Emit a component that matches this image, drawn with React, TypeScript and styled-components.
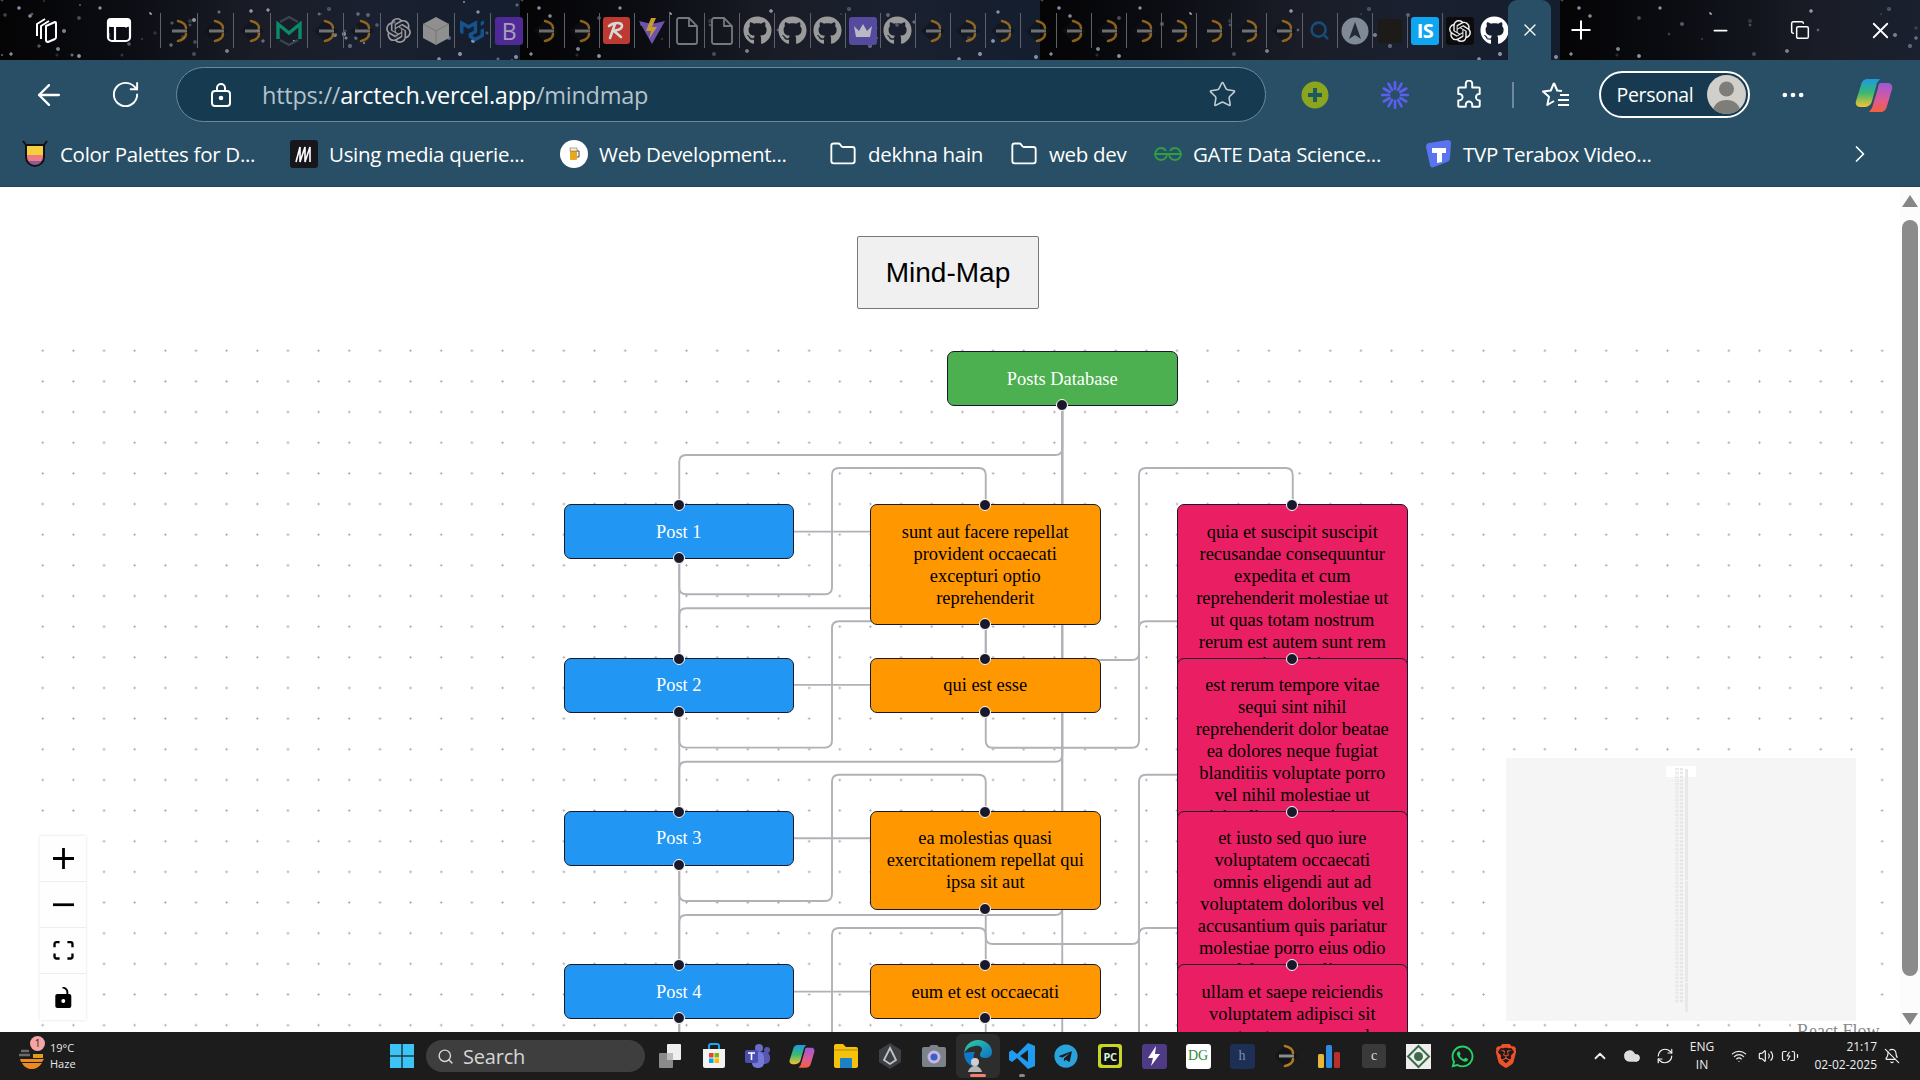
import React from "react";
import styled, {createGlobalStyle} from "styled-components";
import {ArrowLeft, BatteryCharging, BellOff, ChevronRight, ChevronUp, Cloud, Copy, Folder, Minus, MoreHorizontal, Plus, RefreshCw, RotateCw, Search, Star, Volume2, Wifi, X} from "lucide-react";
import {FaGithub, FaTelegram, FaWhatsapp} from "react-icons/fa";
import {SiBrave, SiMui, SiOpenai} from "react-icons/si";

const GlobalStyle = createGlobalStyle`
  html, body { margin: 0; padding: 0; height: 100%; overflow: hidden; background: #fff; }
  #root { height: 100%; }
`

// cheap star field, one tile repeated over the tab strip
function starField(count: number) {
    const out: string[] = []
    let seed = 7
    const next = () => {
        seed = (seed * 16807) % 2147483647
        return seed / 2147483647
    }
    for (let i = 0; i < count; i++) {
        const size = 0.5 + next() * 1.1
        const alpha = 0.15 + next() * 0.55
        out.push(`radial-gradient(circle at ${(next() * 520).toFixed(0)}px ${(next() * 60).toFixed(0)}px, rgba(200,210,235,${alpha.toFixed(2)}) ${size.toFixed(1)}px, transparent ${(size + 0.9).toFixed(1)}px)`)
    }
    return out.join(",")
}

const STARS = starField(70)

const Screen = styled.div`
  width: 1920px;
  height: 1080px;
  display: flex;
  flex-direction: column;
  overflow: hidden;
  font-family: "Open Sans", "Noto Sans", sans-serif;
`
const TabStrip = styled.div`
  height: 60px;
  flex: none;
  display: flex;
  align-items: flex-start;
  color: #fff;
  background-color: #0a0d14;
  background-image: ${STARS}, linear-gradient(90deg, #040405 0%, #0b0c12 22%, #1a1d27 50%, #1a2030 72%, #141e2e 100%);
  background-size: 520px 60px, 100% 100%;
`
const StripButton = styled.div<{ $w: number }>`
  width: ${p => p.$w}px;
  height: 60px;
  flex: none;
  display: flex;
  align-items: center;
  justify-content: center;
`
const StripSpacer = styled.div`
  flex: 1;
`
const Pins = styled.div`
  display: flex;
  flex: none;
  width: 1348px;
  height: 60px;
  margin-left: 12px;
`
const Pin = styled.div<{ $wide?: boolean }>`
  width: ${p => p.$wide ? 36.7 : 35.15}px;
  height: 35px;
  margin-top: 13px;
  flex: none;
  border-left: 1.5px solid #5e6167;
  display: flex;
  align-items: center;
  justify-content: center;
  box-sizing: border-box;
  color: #9a9a9a;
`
const DimMark = styled.span`
  display: flex;
  opacity: .78;
`
const ActiveTab = styled.div`
  width: 43px;
  height: 60px;
  flex: none;
  background: #284f66;
  border-radius: 9px 9px 0 0;
  display: flex;
  align-items: center;
  justify-content: center;
`
const PlainPin = styled(Pin)`
  border-left: none;
`
const Toolbar = styled.div`
  height: 67px;
  flex: none;
  box-sizing: border-box;
  padding-top: 2px;
  background: #284f66;
  display: flex;
  align-items: center;
  color: #fff;
`
const ToolIcon = styled.div<{ $w: number }>`
  width: ${p => p.$w}px;
  flex: none;
  display: flex;
  justify-content: center;
  align-items: center;
`
const AddressBar = styled.div`
  width: 1090px;
  height: 55px;
  flex: none;
  box-sizing: border-box;
  margin-left: 24px;
  border: 1.5px solid #6c8a9c;
  border-radius: 28px;
  background: #163a50;
  display: flex;
  align-items: center;
  padding: 0 28px 0 33px;
  gap: 30px;
`
const Url = styled.div`
  flex: 1;
  font-size: 23.5px;
  letter-spacing: -0.25px;
  color: #b4c2cb;
  white-space: nowrap;
  b { font-weight: 400; color: #fff; }
`
const ToolSep = styled.div`
  width: 1.5px;
  height: 26px;
  background: #6c8a9c;
  flex: none;
`
const Profile = styled.div`
  width: 151px;
  height: 47px;
  box-sizing: border-box;
  flex: none;
  border: 2px solid #fff;
  border-radius: 24px;
  background: #173a50;
  display: flex;
  align-items: center;
  justify-content: space-between;
  padding: 0 2px 0 16px;
  font-size: 19.5px;
  letter-spacing: -0.3px;
`
const Avatar = styled.div`
  width: 39px;
  height: 39px;
  border-radius: 50%;
  overflow: hidden;
  background: #d0cfca;
  flex: none;
`
const BookmarkBar = styled.div`
  height: 60px;
  flex: none;
  background: #284f66;
  border-bottom: 1px solid #20445a;
  box-sizing: border-box;
  padding: 0 0 5px 21px;
  color: #fff;
  display: flex;
  align-items: center;
  position: relative;
`
const Bookmark = styled.div<{ $w: number }>`
  width: ${p => p.$w}px;
  flex: none;
  display: flex;
  align-items: center;
  gap: 11px;
  font-size: 20.5px;
  letter-spacing: -0.3px;
  white-space: nowrap;
`
const BookmarkIcon = styled.div`
  width: 28px;
  height: 28px;
  flex: none;
  display: flex;
  align-items: center;
  justify-content: center;
`
const BookmarkMore = styled.div`
  margin-left: auto;
  margin-right: 46px;
  display: flex;
`
const Page = styled.div`
  flex: 1;
  min-height: 0;
  display: flex;
  background: #fff;
`
const Content = styled.div`
  flex: 1;
  min-width: 0;
  display: flex;
  flex-direction: column;
`
const HeadingRow = styled.div`
  height: 150px;
  flex: none;
  display: flex;
  justify-content: center;
  align-items: flex-start;
  padding: 49px 4px 0 0;
  box-sizing: border-box;
`
const MapButton = styled.div`
  width: 182px;
  height: 73px;
  box-sizing: border-box;
  border: 1.25px solid #777;
  border-radius: 2px;
  background: #f0f0f0;
  color: #000;
  font-family: "Liberation Sans", Arial, sans-serif;
  font-size: 28px;
  display: flex;
  align-items: center;
  justify-content: center;
`
const Canvas = styled.div`
  flex: 1;
  position: relative;
  overflow: hidden;
  margin: 0 10px 0 25px;
  background-image: radial-gradient(circle, #a6a6ac .9px, transparent 1.2px);
  background-size: 30.67px 30.67px;
  background-position: 2.4px -1.6px;
`
const EdgeLayer = styled.svg`
  position: absolute;
  left: 0;
  top: 0;
  width: 100%;
  height: 100%;
  overflow: visible;
`
const NODE_COLOURS = {
    green: {bg: "#4caf50", fg: "#fff"},
    blue: {bg: "#2196f3", fg: "#fff"},
    orange: {bg: "#ff9800", fg: "#000"},
    pink: {bg: "#e91e63", fg: "#000"},
}
type Tone = keyof typeof NODE_COLOURS
const Node = styled.div<{ $x: number, $y: number, $tone: Tone }>`
  position: absolute;
  left: ${p => p.$x}px;
  top: ${p => p.$y}px;
  width: 230.5px;
  box-sizing: border-box;
  padding: 15.5px 14.5px;
  border: 1.25px solid #1a192b;
  border-radius: 7px;
  background: ${p => NODE_COLOURS[p.$tone].bg};
  color: ${p => NODE_COLOURS[p.$tone].fg};
  font-family: "Liberation Serif", "Times New Roman", serif;
  font-size: 18.4px;
  line-height: 22px;
  text-align: center;
`
const Handle = styled.span<{ $side: "top" | "bottom" }>`
  position: absolute;
  left: 50%;
  ${p => p.$side}: 0;
  width: 12px;
  height: 12px;
  box-sizing: border-box;
  border: 1.25px solid #fff;
  border-radius: 50%;
  background: #1a192b;
  transform: translate(-50%, ${p => p.$side === "top" ? "-50%" : "50%"});
`
const Controls = styled.div`
  position: absolute;
  left: 15px;
  bottom: 12px;
  width: 46px;
  background: #fefefe;
  box-shadow: 0 0 3px rgba(0, 0, 0, .12);
`
const ControlButton = styled.div`
  height: 46px;
  border-bottom: 1.25px solid #eee;
  box-sizing: border-box;
  display: flex;
  align-items: center;
  justify-content: center;
  &:last-child { border-bottom: none; }
`
const MiniMap = styled.svg`
  position: absolute;
  right: 34px;
  bottom: 11.5px;
  width: 350px;
  height: 263px;
  background: #f5f5f5;
`
const Attribution = styled.div`
  position: absolute;
  right: 5px;
  top: 682px;
  width: 88px;
  height: 30px;
  padding-left: 6px;
  background: #fff;
  color: #888;
  font-family: "Liberation Serif", serif;
  font-size: 18px;
  line-height: 24px;
  white-space: nowrap;
  overflow: hidden;
`
const ScrollTrack = styled.div`
  width: 20px;
  flex: none;
  background: #fcfcfc;
  display: flex;
  flex-direction: column;
  align-items: center;
  padding: 8px 0 7px;
  box-sizing: border-box;
`
const ScrollArrow = styled.div<{ $down?: boolean }>`
  width: 0;
  height: 0;
  flex: none;
  border-left: 8px solid transparent;
  border-right: 8px solid transparent;
  ${p => p.$down ? "border-top: 12px solid #868686;" : "border-bottom: 12px solid #868686;"}
`
const ScrollThumb = styled.div`
  width: 16px;
  height: 756px;
  flex: none;
  margin: 13px 0 37px;
  border-radius: 8px;
  background: #8b8b8b;
`
const Taskbar = styled.div`
  height: 48px;
  flex: none;
  background: #1c1c1c;
  display: flex;
  align-items: center;
  color: #fff;
`
const Weather = styled.div`
  width: 380px;
  flex: none;
  position: relative;
  display: flex;
  align-items: center;
  gap: 4px;
  padding-left: 18px;
  box-sizing: border-box;
  font-size: 11px;
  line-height: 16px;
  color: #e8e8e8;
`
const WeatherBadge = styled.span`
  position: absolute;
  left: 30px;
  top: -4px;
  width: 15px;
  height: 15px;
  border-radius: 50%;
  background: #f6a5a5;
  color: #222;
  text-align: center;
  font-size: 10px;
  line-height: 15px;
`
const TaskSlot = styled.div<{ $w?: number, $active?: boolean }>`
  width: ${p => p.$w ?? 44}px;
  height: 44px;
  flex: none;
  display: flex;
  align-items: center;
  justify-content: center;
  border-radius: 6px;
  ${p => p.$active ? "background: #2d2d2d;" : ""}
  position: relative;
`
const Running = styled.span<{ $on?: boolean }>`
  position: absolute;
  bottom: 1px;
  left: 50%;
  transform: translateX(-50%);
  height: 3px;
  border-radius: 2px;
  width: ${p => p.$on ? 16 : 6}px;
  background: ${p => p.$on ? "#f08070" : "#888"};
`
const SearchBox = styled.div`
  width: 219px;
  height: 32px;
  flex: none;
  margin: 0 3px 0 2px;
  border-radius: 16px;
  background: #3e3e3e;
  display: flex;
  align-items: center;
  gap: 9px;
  padding-left: 11px;
  box-sizing: border-box;
  font-size: 20px;
  letter-spacing: -.2px;
  color: #d6d6d6;
`
const Tile = styled.div<{ $bg: string, $fg?: string, $size?: number }>`
  width: ${p => p.$size ?? 24}px;
  height: ${p => p.$size ?? 24}px;
  border-radius: 3px;
  background: ${p => p.$bg};
  color: ${p => p.$fg ?? "#fff"};
  display: flex;
  align-items: center;
  justify-content: center;
  font-size: 14px;
  font-family: "Liberation Serif", serif;
`
const PinLetter = styled(Tile)<{ $text?: number, $weight?: number }>`
  font-family: "Open Sans", sans-serif;
  font-weight: ${p => p.$weight ?? 700};
  font-size: ${p => p.$text ?? 15}px;
  letter-spacing: -.5px;
`
const Tray = styled.div`
  margin-left: auto;
  margin-right: 13px;
  display: flex;
  align-items: center;
  color: #eee;
`
const TrayItem = styled.div<{ $w: number }>`
  width: ${p => p.$w}px;
  flex: none;
  display: flex;
  justify-content: center;
  align-items: center;
`
const TrayClock = styled(TrayItem)`
  justify-content: flex-end;
`
const TrayText = styled.div<{ $right?: boolean }>`
  font-size: 12px;
  line-height: 18px;
  text-align: ${p => p.$right ? "right" : "center"};
  white-space: nowrap;
`

// node geometry, taken in window pixels, the canvas starts at 25,337
const OX = 25
const OY = 337
const NUDGE = 0.8
const COL = {post: 564.5, title: 871, body: 1178}
const CX = {post: 679.25, title: 985.75, body: 1292.75, root: 1062.25}
const ROW = [505, 658.3, 811.7, 965]
const SHORT = 53.3
const TITLE_BOTTOM = [624, 711.7, 908, 1018.3]

const TITLES = [
    "sunt aut facere repellat provident occaecati excepturi optio reprehenderit",
    "qui est esse",
    "ea molestias quasi exercitationem repellat qui ipsa sit aut",
    "eum et est occaecati",
]
const BODIES = [
    "quia et suscipit suscipit recusandae consequuntur expedita et cum reprehenderit molestiae ut ut quas totam nostrum rerum est autem sunt rem eveniet architecto",
    "est rerum tempore vitae sequi sint nihil reprehenderit dolor beatae ea dolores neque fugiat blanditiis voluptate porro vel nihil molestiae ut reiciendis qui aperiam non debitis possimus qui neque nisi nulla",
    "et iusto sed quo iure voluptatem occaecati omnis eligendi aut ad voluptatem doloribus vel accusantium quis pariatur molestiae porro eius odio et labore et velit aut",
    "ullam et saepe reiciendis voluptatem adipisci sit amet autem assumenda provident rerum culpa quis hic commodi nesciunt rem tenetur doloremque ipsam iure",
]

type Point = [number, number]

function route(points: Point[], r = 7) {
    let d = `M${points[0][0] - OX} ${points[0][1] - OY}`
    for (let i = 1; i < points.length; i++) {
        const [x, y] = points[i]
        const [px, py] = points[i - 1]
        if (i === points.length - 1) {
            d += `L${x - OX} ${y - OY}`
            break
        }
        const [nx, ny] = points[i + 1]
        const inLen = Math.hypot(x - px, y - py) || 1
        const outLen = Math.hypot(nx - x, ny - y) || 1
        const a = Math.min(r, inLen / 2)
        const b = Math.min(r, outLen / 2)
        d += `L${x - OX - (x - px) / inLen * a} ${y - OY - (y - py) / inLen * a}`
        d += `Q${x - OX} ${y - OY} ${x - OX + (nx - x) / outLen * b} ${y - OY + (ny - y) / outLen * b}`
    }
    return d
}

function buildEdges() {
    const edges: string[] = []
    ROW.forEach((top, i) => {
        const postBottom = top + SHORT
        edges.push(route([[CX.root, 405], [CX.root, top - 50], [CX.post, top - 50], [CX.post, top]]))
        edges.push(route([[794, top + 26.6], [871, top + 26.6]]))
        edges.push(route([[CX.post, postBottom], [CX.post, postBottom + 36], [832, postBottom + 36], [832, top - 37], [CX.title, top - 37], [CX.title, top]]))
        edges.push(route([[CX.title, TITLE_BOTTOM[i]], [CX.title, TITLE_BOTTOM[i] + 36], [1139, TITLE_BOTTOM[i] + 36], [1139, top - 37], [CX.body, top - 37], [CX.body, top]]))
        if (i < ROW.length - 1) edges.push(route([[CX.post, postBottom], [CX.post, ROW[i + 1]]]))
    })
    edges.push(route([[CX.root, 405], [CX.root, 1060]]))
    edges.push(route([[CX.post, 1018], [CX.post, 1060]]))
    return edges
}

const ArcMark = () => <svg width="28" height="28" viewBox="0 0 28 28" fill="none">
    <path d="M14 2 26 14 14 26 2 14Z" fill="#101218" opacity=".7"/>
    <path d="M13 4c5 1 8 4 8 7M13 24c5-1 8-4 8-7" stroke="#b27a1e" strokeWidth="2.6" strokeLinecap="round"/>
    <path d="M7 14h15" stroke="#8b8b8b" strokeWidth="3"/>
</svg>

const MMark = () => <svg width="28" height="32" viewBox="0 0 28 32" fill="none">
    <path d="M5 7 14 2l9 5M5 25l9 5 9-5" stroke="#3b4352" strokeWidth="2.4"/>
    <path d="M3 24V9l11 9 11-9v15" stroke="#0a8a66" strokeWidth="3.4"/>
</svg>

const CubeMark = () => <svg width="28" height="30" viewBox="0 0 28 30">
    <path d="M14 1 27 8v14l-13 7L1 22V8z" fill="#8f8f8f"/>
    <path d="M1 8l13 7 13-7M14 15v14" stroke="#777" fill="none"/>
</svg>

const RMark = () => <Tile $bg="#bd3a30" $fg="#ddd" $size={27}>
    <svg width="21" height="21" viewBox="0 0 21 21" fill="none">
        <path d="M3 6c5-4 13-4 13 0s-6 4-8 5l7 6M9 4 4 18" stroke="#d8d8d8" strokeWidth="2.6" strokeLinecap="round"/>
    </svg>
</Tile>

const ViteMark = () => <svg width="28" height="28" viewBox="0 0 28 28">
    <path d="M1 4 14 27 27 4 14 7z" fill="#6d53b0"/>
    <path d="M13 1 8 14h5l-2 8 8-12h-5l4-9z" fill="#c99a2e"/>
</svg>

const DocMark = () => <svg width="22" height="28" viewBox="0 0 22 28" fill="none" stroke="#77787c" strokeWidth="1.8">
    <path d="M3 1h10l8 8v16a2 2 0 0 1-2 2H3a2 2 0 0 1-2-2V3a2 2 0 0 1 2-2z"/>
    <path d="M13 1v8h8"/>
</svg>

const CrownMark = () => <Tile $bg="#554a9e" $size={28}>
    <svg width="20" height="16" viewBox="0 0 20 16"><path d="M1 3l5 5 4-7 4 7 5-5-2 11H3z" fill="#b9b9c4"/></svg>
</Tile>

const AMark = () => <svg width="28" height="28" viewBox="0 0 28 28">
    <circle cx="14" cy="14" r="13.5" fill="#808a96"/>
    <path d="M14 5 8 22l6-4 6 4z" fill="#232a36"/>
</svg>

type PinSpec = { key: string, node?: React.ReactNode, wide?: boolean }

function pinList(): PinSpec[] {
    const arc = <DimMark><ArcMark/></DimMark>
    const git = <FaGithub size={29}/>
    const first: React.ReactNode[] = [arc, arc, arc, <MMark/>, arc, arc, <SiOpenai size={25} color="#9a9a9a"/>, <CubeMark/>,
        <SiMui size={24} color="#15538f"/>, <PinLetter $bg="#4f2a96" $fg="#a7a1b8" $size={28} $text={23} $weight={400}>B</PinLetter>, arc]
    const rest: React.ReactNode[] = [arc, <RMark/>, <ViteMark/>, <DocMark/>, <DocMark/>, git, git, git, <CrownMark/>, git,
        arc, arc, arc, arc, arc, arc, arc, arc, arc, arc, arc,
        <Search size={21} color="#154c78" strokeWidth={3}/>, <AMark/>]
    return [
        ...first.map((node, i) => ({key: `a${i}`, node, wide: true})),
        ...rest.map((node, i) => ({key: `b${i}`, node})),
    ]
}

const TabsIcon = () => <svg width="32" height="32" viewBox="0 0 32 32" fill="none" stroke="#fff" strokeWidth="2" strokeLinejoin="round">
    <path d="M8 22V10l8-5"/>
    <path d="M12 25V12l8-5"/>
    <path d="M17 12l9-4a1 1 0 0 1 1 1v14a2 2 0 0 1-1 2l-7 3a2 2 0 0 1-2-2z"/>
</svg>

const PanelIcon = () => <svg width="26" height="26" viewBox="0 0 26 26" fill="none" stroke="#fff" strokeWidth="2.2">
    <rect x="2" y="2" width="22" height="22" rx="4"/>
    <rect x="2" y="2" width="22" height="7" rx="3" fill="#fff"/>
    <path d="M9 9v15"/>
</svg>

const LockIcon = () => <svg width="22" height="26" viewBox="0 0 22 26" fill="none" stroke="#fff" strokeWidth="2">
    <rect x="2" y="9" width="18" height="15" rx="3"/>
    <path d="M7 9V6a4 4 0 0 1 8 0v3"/>
    <circle cx="11" cy="16" r="1.3" fill="#fff"/>
</svg>

const AddinIcon = () => <svg width="28" height="28" viewBox="0 0 28 28">
    <circle cx="14" cy="14" r="13.5" fill="#8ba51f"/>
    <path d="M14 7v14M7 14h14" stroke="#1d5a5e" strokeWidth="4"/>
</svg>

const BurstIcon = () => <svg width="28" height="28" viewBox="0 0 28 28" stroke="#5b5ff0" strokeWidth="2.6" strokeLinecap="round">
    {Array.from({length: 12}).map((_, i) => {
        const a = i / 12 * Math.PI * 2
        return <line key={i} x1={14 + Math.cos(a) * 6} y1={14 + Math.sin(a) * 6} x2={14 + Math.cos(a) * 13} y2={14 + Math.sin(a) * 13}/>
    })}
</svg>

const ExtensionIcon = () => <svg width="30" height="30" viewBox="0 0 28 28" fill="none" stroke="#fff" strokeWidth="1.8" strokeLinejoin="round">
    <path d="M11 3.500a3 3 0 0 1 6 0V7h6a1 1 0 0 1 1 1v5h-.5a3 3 0 0 0 0 6H24v5a1 1 0 0 1-1 1h-6v-2a3 3 0 0 0-6 0v2H5a1 1 0 0 1-1-1v-5h1a3 3 0 0 0 0-6H4V8a1 1 0 0 1 1-1h6z"/>
</svg>

const FavIcon = () => <svg width="30" height="30" viewBox="0 0 30 30" fill="none" stroke="#fff" strokeWidth="2" strokeLinejoin="round">
    <path d="M13 3l3.2 7.5 4.8.6M13 3l-3.2 7.5L2 11.500l6 5.300L6.300 25 13 21"/>
    <path d="M19 15h9M17 20h11M17 25h11"/>
</svg>

const CopilotIcon = ({size = 38}: { size?: number }) => <svg width={size} height={size} viewBox="0 0 38 38">
    <defs>
        <linearGradient id="cpa" x1="0" y1="0" x2="0" y2="1">
            <stop offset="0" stopColor="#1a9be0"/><stop offset=".5" stopColor="#3cb870"/><stop offset="1" stopColor="#f4c430"/>
        </linearGradient>
        <linearGradient id="cpb" x1="0" y1="0" x2="0" y2="1">
            <stop offset="0" stopColor="#9a5ad8"/><stop offset=".6" stopColor="#e05a90"/><stop offset="1" stopColor="#f0603c"/>
        </linearGradient>
    </defs>
    <path d="M13 3h12l-3 4-5 18c-1 4-4 6-8 6H5c-3 0-5-3-4-6l5-16c1-4 3-6 7-6z" fill="url(#cpa)"/>
    <path d="M26 7h7c3 0 5 3 4 6l-5 17c-1 4-3 6-7 6H14l3-4 6-20c0-3 1-5 3-5z" fill="url(#cpb)"/>
</svg>

const BeerIcon = () => <svg width="28" height="28" viewBox="0 0 28 28">
    <circle cx="14" cy="14" r="14" fill="#fff"/>
    <rect x="10" y="8" width="7" height="12" rx="1" fill="#e8a820"/>
    <rect x="10" y="8" width="7" height="3" fill="#fff3c8" stroke="#555" strokeWidth=".5"/>
    <path d="M17 11h2v6h-2" fill="none" stroke="#444"/>
</svg>

const PaletteIcon = () => <svg width="28" height="30" viewBox="0 0 28 30">
    <path d="M5 6h18v12a9 9 0 0 1-18 0z" fill="#f4d03f"/>
    <path d="M5 16h18v2l-1 4H6l-1-4z" fill="#ee7b83"/>
    <path d="M6 22h16l-2 4-6 2-6-2z" fill="#8d5a9a"/>
    <path d="M2 2l3 4h18l3-4M5 6v12a9 9 0 0 0 18 0V6" fill="none" stroke="#111" strokeWidth="2"/>
</svg>

const MediaIcon = () => <Tile $bg="#16161c" $fg="#fff" $size={28}>
    <svg width="20" height="18" viewBox="0 0 20 18" fill="none" stroke="#fff" strokeWidth="1.6"><path d="M2 17 6 2v15L11 2v15l5-15v15"/></svg>
</Tile>

const GfgIcon = () => <svg width="28" height="16" viewBox="0 0 28 16" fill="none" stroke="#2f9e44" strokeWidth="1.8">
    <path d="M14 8H1c1-4 3-6 6-6 2 0 4 1 5 3M14 8H27c-1-4-3-6-6-6-2 0-4 1-5 3M1 9c1 3 3 5 6 5s5-2 6-5M27 9c-1 3-3 5-6 5s-5-2-6-5"/>
</svg>

const TeraIcon = () => <svg width="28" height="30" viewBox="0 0 28 30">
    <path d="M5 4 24 1c2 0 3 1 3 3l-1 15c0 2-1 3-3 4L10 28c-2 1-4 0-4-2L2 8c0-2 1-4 3-4z" fill="#5a74f0"/>
    <path d="M8 9h14v5h-4v9l-5 1v-10H8z" fill="#fff"/>
</svg>

const WinLogo = () => <svg width="24" height="24" viewBox="0 0 24 24" fill="#3cc4f4">
    <rect x="0" y="0" width="11.400" height="11.400"/><rect x="12.600" y="0" width="11.400" height="11.400"/>
    <rect x="0" y="12.600" width="11.400" height="11.400"/><rect x="12.600" y="12.600" width="11.400" height="11.400"/>
</svg>

const WeatherIcon = () => <svg width="28" height="30" viewBox="0 0 28 30">
    <path d="M3 10h8M1 14h11" stroke="#6a6a6a" strokeWidth="2.400"/>
    <path d="M2 18h24l-2 3H3zM4 22h20c-3 4-6 6-10 6s-8-2-10-6z" fill="#ec8a20"/>
    <rect x="15" y="13" width="10" height="4" fill="#d9a020"/>
</svg>

const WidgetIcon = () => <svg width="24" height="24" viewBox="0 0 24 24">
    <rect x="9" y="0" width="14" height="16" rx="1" fill="#efefef"/>
    <rect x="1" y="9" width="14" height="15" rx="1" fill="#8a8a8a"/>
    <rect x="9" y="9" width="6" height="7" fill="#bdbdbd"/>
</svg>

const StoreIcon = () => <svg width="24" height="26" viewBox="0 0 24 26">
    <path d="M7 6V3a2 2 0 0 1 2-2h6a2 2 0 0 1 2 2v3" fill="none" stroke="#1aa6e8" strokeWidth="2"/>
    <path d="M1 6h22v17a2 2 0 0 1-2 2H3a2 2 0 0 1-2-2z" fill="#f2f2f2"/>
    <rect x="7" y="10" width="4.500" height="4.500" fill="#e5452c"/><rect x="12.500" y="10" width="4.500" height="4.500" fill="#7fba00"/>
    <rect x="7" y="15.500" width="4.500" height="4.500" fill="#00a4ef"/><rect x="12.500" y="15.500" width="4.500" height="4.500" fill="#ffb900"/>
</svg>

const TeamsIcon = () => <svg width="26" height="26" viewBox="0 0 26 26">
    <circle cx="14" cy="5" r="4" fill="#6a6cc8"/><circle cx="22" cy="7" r="3" fill="#5558ae"/>
    <rect x="11" y="9" width="14" height="12" rx="5" fill="#5558ae"/>
    <rect x="7" y="9" width="12" height="16" rx="5" fill="#7678d8"/>
    <rect x="0" y="7" width="13" height="13" rx="2" fill="#4a4db0"/>
    <path d="M3 10h7M6.500 10v7" stroke="#fff" strokeWidth="1.600"/>
</svg>

const FolderIcon = () => <svg width="26" height="26" viewBox="0 0 26 26">
    <path d="M1 3a2 2 0 0 1 2-2h7l3 3h10a2 2 0 0 1 2 2v17a2 2 0 0 1-2 2H3a2 2 0 0 1-2-2z" fill="#f4c20d"/>
    <path d="M1 6h24v2H1z" fill="#d9a406"/>
    <path d="M8 15h10a1 1 0 0 1 1 1v9H7v-9a1 1 0 0 1 1-1z" fill="#1a80c8"/>
</svg>

const HexIcon = () => <svg width="24" height="28" viewBox="0 0 24 28">
    <path d="M12 1 23 8v12l-11 7L1 20V8z" fill="#3c4045"/>
    <path d="M12 6 18 18l-6 4-6-4z" fill="none" stroke="#c0c4c8" strokeWidth="1.800"/>
</svg>

const CameraIcon = () => <svg width="26" height="24" viewBox="0 0 26 24">
    <path d="M8 3l2-2h6l2 2h5a2 2 0 0 1 2 2v16a2 2 0 0 1-2 2H3a2 2 0 0 1-2-2V5a2 2 0 0 1 2-2z" fill="#7b8288"/>
    <circle cx="13" cy="13" r="6.500" fill="#c6b6e8"/><circle cx="13" cy="13" r="3.500" fill="#3a60c0"/>
</svg>

const EdgeIcon = () => <svg width="30" height="34" viewBox="0 0 30 34">
    <defs>
        <linearGradient id="edgea" x1="0" y1="0" x2="1" y2="1">
            <stop offset="0" stopColor="#2fd1a0"/><stop offset="1" stopColor="#0c70c8"/>
        </linearGradient>
    </defs>
    <path d="M1 14C2 6 8 1 15 1c8 0 14 6 14 12 0 4-3 6-7 6-3 0-5-1-5-3 0-3 2-3 2-6 0-2-3-4-7-3-6 1-9 4-11 7z" fill="url(#edgea)"/>
    <path d="M1 14c0 8 6 14 12 14 3 0 2-2 0-4-3-3-3-8-1-11-5 0-9 0-11 1z" fill="#1078c8"/>
    <circle cx="12" cy="23" r="4" fill="#cfcfcf"/>
    <path d="M5 33c1-4 4-6 7-6s6 2 7 6z" fill="#b5b5b5"/>
</svg>

const CodeIcon = () => <svg width="26" height="28" viewBox="0 0 26 28">
    <path d="M19 1 26 4v20l-7 3L8 16l-5 4-3-2v-8l3-2 5 4z" fill="#1f9cf0"/>
    <path d="M19 8 11 14l8 6z" fill="#1c1c1c"/>
</svg>

const PyCharmIcon = () => <Tile $bg="#c8d42a" $size={24}>
    <PinLetter $bg="#111" $fg="#d6f0d6" $size={18} $text={11}>PC</PinLetter>
</Tile>

const BoltIcon = () => <Tile $bg="#4f3a85" $size={25}>
    <svg width="14" height="20" viewBox="0 0 14 20"><path d="M9 0 1 12h5l-2 8 9-12H8z" fill="#fff"/></svg>
</Tile>

const BarsIcon = () => <svg width="24" height="24" viewBox="0 0 24 24">
    <rect x="0" y="10" width="6" height="14" rx="1.500" fill="#e6b83a"/>
    <rect x="8" y="1" width="6" height="23" rx="1.500" fill="#2f8be0"/>
    <rect x="16" y="8" width="6" height="16" rx="1.500" fill="#b8302a"/>
</svg>

const KvIcon = () => <svg width="25" height="25" viewBox="0 0 25 25">
    <rect width="25" height="25" fill="#eee"/>
    <path d="M12.500 2 23 12.500 12.500 23 2 12.500Z" fill="none" stroke="#3b6b4a" strokeWidth="2"/>
    <circle cx="12.500" cy="12.500" r="4.500" fill="#3b6b4a"/>
</svg>

export default function App() {
    const edges = buildEdges()
    const pins = pinList()
    return <Screen>
        <GlobalStyle/>
        <TabStrip>
            <StripButton $w={90}><TabsIcon/></StripButton>
            <StripButton $w={58}><PanelIcon/></StripButton>
            <Pins>
                {pins.map(pin => <Pin key={pin.key} $wide={pin.wide}>{pin.node}</Pin>)}
                <Pin><Tile $bg="#1c1b18" $size={24}/></Pin>
                <Pin><PinLetter $bg="#10a5f0" $fg="#fff" $size={28} $text={20}>IS</PinLetter></Pin>
                <Pin><Tile $bg="#0c0c0c" $size={28}><SiOpenai size={22} color="#eee"/></Tile></Pin>
                <PlainPin><FaGithub size={29} color="#fff"/></PlainPin>
            </Pins>
            <ActiveTab><X size={20} strokeWidth={1.6}/></ActiveTab>
            <StripButton $w={60}><Plus size={30} strokeWidth={1.6}/></StripButton>
            <StripSpacer/>
            <StripButton $w={80}><Minus size={21} strokeWidth={2}/></StripButton>
            <StripButton $w={80}><Copy size={20} strokeWidth={1.8}/></StripButton>
            <StripButton $w={80}><X size={27} strokeWidth={1.6}/></StripButton>
        </TabStrip>
        <Toolbar>
            <ToolIcon $w={98}><ArrowLeft size={34} strokeWidth={1.6}/></ToolIcon>
            <ToolIcon $w={54}><RotateCw size={31} strokeWidth={1.5}/></ToolIcon>
            <AddressBar>
                <LockIcon/>
                <Url>https://<b>arctech.vercel.app</b>/mindmap</Url>
                <Star size={29} strokeWidth={1.3} color="#c2ced6"/>
            </AddressBar>
            <ToolIcon $w={98}><AddinIcon/></ToolIcon>
            <ToolIcon $w={62}><BurstIcon/></ToolIcon>
            <ToolIcon $w={86}><ExtensionIcon/></ToolIcon>
            <ToolSep/>
            <ToolIcon $w={85}><FavIcon/></ToolIcon>
            <Profile>
                Personal
                <Avatar>
                    <svg width="39" height="39" viewBox="0 0 39 39">
                        <circle cx="19.500" cy="14" r="7.500" fill="#7d7d7a"/>
                        <path d="M5 39c1-10 7-14 14.500-14S33 29 34 39z" fill="#7d7d7a"/>
                    </svg>
                </Avatar>
            </Profile>
            <ToolIcon $w={86}><MoreHorizontal size={28} strokeWidth={2}/></ToolIcon>
            <ToolIcon $w={76}><CopilotIcon/></ToolIcon>
        </Toolbar>
        <BookmarkBar>
            <Bookmark $w={269}><BookmarkIcon><PaletteIcon/></BookmarkIcon>Color Palettes for D...</Bookmark>
            <Bookmark $w={270}><BookmarkIcon><MediaIcon/></BookmarkIcon>Using media querie...</Bookmark>
            <Bookmark $w={269}><BookmarkIcon><BeerIcon/></BookmarkIcon>Web Development...</Bookmark>
            <Bookmark $w={181}><BookmarkIcon><Folder size={28} strokeWidth={1.6}/></BookmarkIcon>dekhna hain</Bookmark>
            <Bookmark $w={144}><BookmarkIcon><Folder size={28} strokeWidth={1.6}/></BookmarkIcon>web dev</Bookmark>
            <Bookmark $w={270}><BookmarkIcon><GfgIcon/></BookmarkIcon>GATE Data Science...</Bookmark>
            <Bookmark $w={240}><BookmarkIcon><TeraIcon/></BookmarkIcon>TVP Terabox Video...</Bookmark>
            <BookmarkMore><ChevronRight size={28} strokeWidth={1.5}/></BookmarkMore>
        </BookmarkBar>
        <Page>
            <Content>
                <HeadingRow><MapButton>Mind-Map</MapButton></HeadingRow>
                <Canvas>
                    <EdgeLayer>
                        {edges.map((d, i) => <path key={i} d={d} fill="none" stroke="#b1b1b7" strokeWidth="1.9"/>)}
                    </EdgeLayer>
                    <Node $x={947 - OX} $y={351 - OY} $tone="green">
                        Posts Database
                        <Handle $side="bottom"/>
                    </Node>
                    {ROW.map((top, i) => <React.Fragment key={i}>
                        <Node $x={COL.post - 1 - OX} $y={top - NUDGE - OY} $tone="blue">
                            <Handle $side="top"/>
                            Post {i + 1}
                            <Handle $side="bottom"/>
                        </Node>
                        <Node $x={COL.title - 1 - OX} $y={top - NUDGE - OY} $tone="orange">
                            <Handle $side="top"/>
                            {TITLES[i]}
                            <Handle $side="bottom"/>
                        </Node>
                        <Node $x={COL.body - 1 - OX} $y={top - NUDGE - OY} $tone="pink">
                            <Handle $side="top"/>
                            {BODIES[i]}
                            <Handle $side="bottom"/>
                        </Node>
                    </React.Fragment>)}
                    <Controls>
                        <ControlButton>
                            <svg width="21" height="21" viewBox="0 0 32 32"><path d="M32 18.133H18.133V32h-4.266V18.133H0v-4.266h13.867V0h4.266v13.867H32z"/></svg>
                        </ControlButton>
                        <ControlButton>
                            <svg width="21" height="4" viewBox="0 0 32 5"><path d="M0 0h32v4.200H0z"/></svg>
                        </ControlButton>
                        <ControlButton>
                            <svg width="21" height="19" viewBox="0 0 32 30"><path d="M3.692 4.630c0-.53.4-.938.939-.938h5.215V0H4.708C2.130 0 0 2.054 0 4.630v5.216h3.692V4.631zM27.354 0h-5.200v3.692h5.170c.53 0 .984.4.984.939v5.215H32V4.631A4.624 4.624 0 0027.354 0zm.954 24.830c0 .532-.4.940-.939.940h-5.215v3.768h5.215c2.577 0 4.631-2.130 4.631-4.707v-5.139h-3.692v5.139zm-23.677.940c-.531 0-.939-.4-.939-.940v-5.138H0v5.139c0 2.577 2.130 4.707 4.708 4.707h5.138V25.770H4.631z"/></svg>
                        </ControlButton>
                        <ControlButton>
                            <svg width="17" height="21" viewBox="0 0 25 32"><path d="M21.333 10.667H19.810V7.619C19.810 3.429 16.380 0 12.190 0c-4.114 1.828-1.370 2.133.305 2.438 1.676.305 4.420 2.590 4.420 5.181v3.048H3.047A3.056 3.056 0 000 13.714v15.238A3.056 3.056 0 003.048 32h18.285a3.056 3.056 0 003.048-3.048V13.714a3.056 3.056 0 00-3.048-3.047zM12.190 24.533a3.056 3.056 0 01-3.047-3.047 3.056 3.056 0 013.047-3.048 3.056 3.056 0 013.048 3.048 3.056 3.056 0 01-3.048 3.047z"/></svg>
                        </ControlButton>
                    </Controls>
                    <Attribution>React Flow</Attribution>
                    <MiniMap viewBox="0 0 350 263">
                        <rect x="160" y="8" width="30" height="11" fill="#fff"/>
                        {Array.from({length: 62}).map((_, i) => <g key={i} fill="#e6e6e6">
                            <rect x="169" y={10 + i * 3.8} width="4" height=".9"/>
                            <rect x="169" y={11.5 + i * 3.8} width="4" height=".9"/>
                            <rect x="174" y={10 + i * 3.8} width="3" height="2.400"/>
                        </g>)}
                        <rect x="179" y="11" width="3" height="111" fill="#e8e8e8"/>
                        <rect x="179" y="123" width="3" height="101" fill="#e8e8e8"/>
                        <rect x="179" y="225" width="3" height="29" fill="#e8e8e8"/>
                    </MiniMap>
                </Canvas>
            </Content>
            <ScrollTrack>
                <ScrollArrow/>
                <ScrollThumb/>
                <ScrollArrow $down/>
            </ScrollTrack>
        </Page>
        <Taskbar>
            <Weather>
                <WeatherIcon/>
                <WeatherBadge>1</WeatherBadge>
                <div>19°C<br/>Haze</div>
            </Weather>
            <TaskSlot><WinLogo/></TaskSlot>
            <SearchBox><Search size={17} strokeWidth={2}/>Search</SearchBox>
            <TaskSlot><WidgetIcon/></TaskSlot>
            <TaskSlot><StoreIcon/></TaskSlot>
            <TaskSlot><TeamsIcon/></TaskSlot>
            <TaskSlot><CopilotIcon size={26}/></TaskSlot>
            <TaskSlot><FolderIcon/></TaskSlot>
            <TaskSlot><HexIcon/></TaskSlot>
            <TaskSlot><CameraIcon/></TaskSlot>
            <TaskSlot $active><EdgeIcon/><Running $on/></TaskSlot>
            <TaskSlot><CodeIcon/><Running/></TaskSlot>
            <TaskSlot><FaTelegram size={24} color="#2aa3dc"/></TaskSlot>
            <TaskSlot><PyCharmIcon/></TaskSlot>
            <TaskSlot><BoltIcon/></TaskSlot>
            <TaskSlot><Tile $bg="#fff" $fg="#2f8a3c" $size={25}>DG</Tile></TaskSlot>
            <TaskSlot><Tile $bg="#1d2f55" $fg="#7f8db0" $size={25}>h</Tile></TaskSlot>
            <TaskSlot><ArcMark/></TaskSlot>
            <TaskSlot><BarsIcon/></TaskSlot>
            <TaskSlot><Tile $bg="#3a3a3a" $fg="#ddd" $size={24}>c</Tile></TaskSlot>
            <TaskSlot><KvIcon/></TaskSlot>
            <TaskSlot><FaWhatsapp size={25} color="#25d366"/></TaskSlot>
            <TaskSlot><SiBrave size={24} color="#f0502a"/></TaskSlot>
            <Tray>
                <TrayItem $w={30}><ChevronUp size={18} strokeWidth={2.4}/></TrayItem>
                <TrayItem $w={34}><Cloud size={18} fill="#ddd" strokeWidth={1}/></TrayItem>
                <TrayItem $w={32}><RefreshCw size={18} strokeWidth={1.6}/></TrayItem>
                <TrayItem $w={42}><TrayText>ENG<br/>IN</TrayText></TrayItem>
                <TrayItem $w={32}><Wifi size={16} strokeWidth={1.8}/></TrayItem>
                <TrayItem $w={22}><Volume2 size={16} strokeWidth={1.8}/></TrayItem>
                <TrayItem $w={26}><BatteryCharging size={18} strokeWidth={1.6}/></TrayItem>
                <TrayClock $w={74}><TrayText $right>21:17<br/>02-02-2025</TrayText></TrayClock>
                <TrayItem $w={30}><BellOff size={16} strokeWidth={1.8}/></TrayItem>
            </Tray>
        </Taskbar>
    </Screen>
}
